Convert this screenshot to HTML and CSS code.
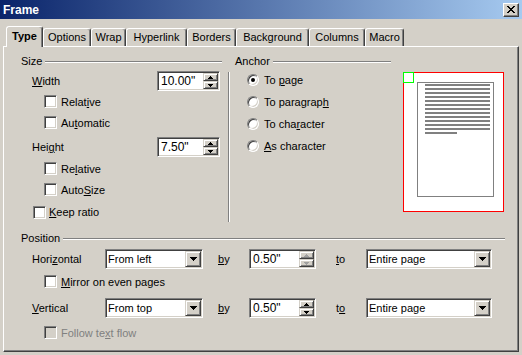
FILE: index.html
```html
<!DOCTYPE html>
<html>
<head>
<meta charset="utf-8">
<link rel="stylesheet" href="styles.css">
</head>
<body>
<div class="titlebar">
  <span class="title">Frame</span>
  <div class="close">
    <svg width="8" height="7" viewBox="0 0 8 7">
      <rect x="0" y="0" width="2" height="1"/><rect x="6" y="0" width="2" height="1"/>
      <rect x="1" y="1" width="2" height="1"/><rect x="5" y="1" width="2" height="1"/>
      <rect x="2" y="2" width="4" height="1"/>
      <rect x="3" y="3" width="2" height="1"/>
      <rect x="2" y="4" width="4" height="1"/>
      <rect x="1" y="5" width="2" height="1"/><rect x="5" y="5" width="2" height="1"/>
      <rect x="0" y="6" width="2" height="1"/><rect x="6" y="6" width="2" height="1"/>
    </svg>
  </div>
</div>

<div class="tabs">
  <div class="tab active t-type">Type</div>
  <div class="tab t-options">Options</div>
  <div class="tab t-wrap">Wrap</div>
  <div class="tab t-hyper">Hyperlink</div>
  <div class="tab t-borders">Borders</div>
  <div class="tab t-bg">Background</div>
  <div class="tab t-columns">Columns</div>
  <div class="tab t-macro">Macro</div>
</div>

<div class="panel">
  <div class="top">
    <div class="size-col">
      <div class="ghead"><span>Size</span></div>
      <div class="frow first">
        <span class="flabel"><u>W</u>idth</span>
        <div class="spin w63">
          <span class="val">10.00"</span>
          <div class="sbtns">
            <div class="sbtn"><svg width="5" height="3"><path d="M2 0h1v1h1v1h1v1H0V2h1V1h1z"/></svg></div>
            <div class="sbtn"><svg width="5" height="3"><path d="M0 0h5v1h-1v1h-1v1h-1v-1h-1v-1h-1z"/></svg></div>
          </div>
        </div>
      </div>
      <div class="check ind2"><div class="cb"></div><span>Relat<u>i</u>ve</span></div>
      <div class="check ind2"><div class="cb"></div><span>Au<u>t</u>omatic</span></div>
      <div class="frow second">
        <span class="flabel">Hei<u>g</u>ht</span>
        <div class="spin w63">
          <span class="val">7.50"</span>
          <div class="sbtns">
            <div class="sbtn"><svg width="5" height="3"><path d="M2 0h1v1h1v1h1v1H0V2h1V1h1z"/></svg></div>
            <div class="sbtn"><svg width="5" height="3"><path d="M0 0h5v1h-1v1h-1v1h-1v-1h-1v-1h-1z"/></svg></div>
          </div>
        </div>
      </div>
      <div class="check ind2 gap1"><div class="cb"></div><span>Re<u>l</u>ative</span></div>
      <div class="check ind2"><div class="cb"></div><span>Auto<u>S</u>ize</span></div>
      <div class="check ind1 keep"><div class="cb"></div><span><u>K</u>eep ratio</span></div>
    </div>

    <div class="vsep"></div>

    <div class="anchor-col">
      <div class="ghead"><span>Anchor</span></div>
      <div class="radios">
        <div class="rrow"><div class="radio on"></div><span>To <u>p</u>age</span></div>
        <div class="rrow"><div class="radio"></div><span>To paragrap<u>h</u></span></div>
        <div class="rrow"><div class="radio"></div><span>To cha<u>r</u>acter</span></div>
        <div class="rrow"><div class="radio"></div><span><u>A</u>s character</span></div>
      </div>
    </div>

    <div class="preview">
      <div class="amark"></div>
      <div class="page">
        <div class="ln"></div><div class="ln"></div><div class="ln"></div><div class="ln"></div>
        <div class="ln"></div><div class="ln"></div><div class="ln"></div><div class="ln"></div>
        <div class="ln"></div><div class="ln"></div><div class="ln"></div><div class="ln"></div>
        <div class="ln short"></div>
      </div>
    </div>
  </div>

  <div class="position">
    <div class="ghead"><span>Position</span></div>
    <div class="prow first">
      <span class="plabel">Hori<u>z</u>ontal</span>
      <div class="combo w98"><span class="cval">From left</span><div class="dbtn"><svg width="7" height="4"><path d="M0 0h7v1h-1v1h-1v1h-1v1h-1v-1h-1v-1h-1v-1h-1z"/></svg></div></div>
      <span class="by"><u>b</u>y</span>
      <div class="spin w67">
        <span class="val">0.50"</span>
        <div class="sbtns dim">
          <div class="sbtn"><svg width="5" height="3"><path d="M2 0h1v1h1v1h1v1H0V2h1V1h1z"/></svg></div>
          <div class="sbtn"><svg width="5" height="3"><path d="M0 0h5v1h-1v1h-1v1h-1v-1h-1v-1h-1z"/></svg></div>
        </div>
      </div>
      <span class="to"><u>t</u>o</span>
      <div class="combo w126"><span class="cval">Entire page</span><div class="dbtn"><svg width="7" height="4"><path d="M0 0h7v1h-1v1h-1v1h-1v1h-1v-1h-1v-1h-1v-1h-1z"/></svg></div></div>
    </div>
    <div class="check ind2 mirror"><div class="cb"></div><span><u>M</u>irror on even pages</span></div>
    <div class="prow second">
      <span class="plabel"><u>V</u>ertical</span>
      <div class="combo w98"><span class="cval">From top</span><div class="dbtn"><svg width="7" height="4"><path d="M0 0h7v1h-1v1h-1v1h-1v1h-1v-1h-1v-1h-1v-1h-1z"/></svg></div></div>
      <span class="by"><u>b</u>y</span>
      <div class="spin w67">
        <span class="val">0.50"</span>
        <div class="sbtns">
          <div class="sbtn"><svg width="5" height="3"><path d="M2 0h1v1h1v1h1v1H0V2h1V1h1z"/></svg></div>
          <div class="sbtn"><svg width="5" height="3"><path d="M0 0h5v1h-1v1h-1v1h-1v-1h-1v-1h-1z"/></svg></div>
        </div>
      </div>
      <span class="to">t<u>o</u></span>
      <div class="combo w126"><span class="cval">Entire page</span><div class="dbtn"><svg width="7" height="4"><path d="M0 0h7v1h-1v1h-1v1h-1v1h-1v-1h-1v-1h-1v-1h-1z"/></svg></div></div>
    </div>
    <div class="check ind2 follow disabled"><div class="cb"></div><span>Follow te<u>x</u>t flow</span></div>
  </div>
</div>
</body>
</html>
```

FILE: styles.css
```css
html, body {
  margin: 0;
  padding: 0;
}
body {
  width: 522px;
  height: 355px;
  overflow: hidden;
  background: #d4d0c8;
  font-family: "Liberation Sans", Arial, sans-serif;
  font-size: 11px;
  color: #000;
}
u {
  text-decoration: underline;
  text-decoration-thickness: 1px;
  text-underline-offset: 1px;
}

/* title bar */
.titlebar {
  height: 19px;
  box-sizing: border-box;
  padding: 0 3px 0 3px;
  background: linear-gradient(to right, #0a246a, #a6caf0);
  display: flex;
  align-items: center;
  justify-content: space-between;
}
.title {
  color: #fff;
  font-weight: bold;
  font-size: 12px;
}
.close {
  width: 16px;
  height: 14px;
  box-sizing: border-box;
  background: #d4d0c8;
  border: 1px solid;
  border-color: #fff #404040 #404040 #fff;
  box-shadow: inset -1px -1px #808080;
  display: flex;
  align-items: center;
  justify-content: center;
}
.close svg { fill: #000; display: block; }

/* tabs */
.tabs {
  display: flex;
  align-items: flex-start;
  height: 21px;
  margin: 7px 0 -1px 6px;
}
.tab {
  box-sizing: border-box;
  height: 18px;
  margin-top: 2px;
  border: 1px solid;
  border-bottom: none;
  border-color: #fff #404040 transparent #fff;
  border-radius: 3px 3px 0 0;
  box-shadow: inset -1px 0 #808080;
  text-align: center;
  line-height: 17px;
  background: #d4d0c8;
}
.tab.active {
  height: 21px;
  margin-top: 0;
  font-weight: bold;
  line-height: 18px;
  position: relative;
  z-index: 1;
}
.t-type { width: 37px; }
.t-options { width: 48px; }
.t-wrap { width: 35px; }
.t-hyper { width: 61px; }
.t-borders { width: 49px; }
.t-bg { width: 73px; }
.t-columns { width: 56px; }
.t-macro { width: 39px; }

/* panel */
.panel {
  margin-left: 3px;
  width: 516px;
  height: 306px;
  box-sizing: border-box;
  border: 1px solid;
  border-color: #fff #404040 #404040 #fff;
  box-shadow: inset -1px -1px #808080;
  padding: 7px 0 0 17px;
}
.top {
  display: flex;
  height: 170px;
}

/* group header with etched line */
.ghead {
  display: flex;
  align-items: flex-start;
  height: 14px;
  line-height: 14px;
}
.ghead::after {
  content: "";
  flex: 1;
  margin: 7px 0 0 3px;
  border-top: 1px solid #808080;
  border-bottom: 1px solid #fff;
}

/* size column */
.size-col { width: 201px; }
.frow {
  display: flex;
  align-items: center;
  height: 20px;
  padding-left: 11px;
}
.frow.first { margin-top: 3px; }
.frow.second { margin-top: 4px; }
.flabel { width: 125px; }

.check {
  display: flex;
  align-items: center;
  height: 21px;
}
.check span { margin-left: 4px; }
.ind2 { padding-left: 23px; }
.ind1 { padding-left: 12px; }
.gap1 { margin-top: 1px; }
.keep { margin-top: 1px; height: 22px; }
.keep span { margin-left: 3px; }

.cb {
  width: 13px;
  height: 13px;
  box-sizing: border-box;
  border: 1px solid;
  border-color: #808080 #fff #fff #808080;
  box-shadow: inset 1px 1px #404040, inset -1px -1px #d4d0c8;
  background: #fff;
  flex: none;
}
.disabled .cb { background: #d4d0c8; }
.disabled span { color: #808080; }

/* spin field */
.spin, .combo {
  height: 20px;
  box-sizing: border-box;
  border: 1px solid;
  border-color: #808080 #fff #fff #808080;
  padding: 1px;
  box-shadow: inset 1px 1px #404040, inset -1px -1px #d4d0c8;
  background: #fff;
  display: flex;
  align-items: center;
  flex: none;
}
.w63 { width: 63px; }
.w67 { width: 67px; }
.w98 { width: 98px; }
.w126 { width: 126px; }
.val {
  flex: 1;
  padding-left: 2px;
  font-size: 12px;
  line-height: 16px;
}
.sbtns {
  width: 15px;
  height: 16px;
  display: flex;
  flex-direction: column;
}
.sbtn, .dbtn {
  box-sizing: border-box;
  background: #d4d0c8;
  border: 1px solid;
  border-color: #d4d0c8 #404040 #404040 #d4d0c8;
  box-shadow: inset 1px 1px #fff, inset -1px -1px #808080;
  display: flex;
  align-items: center;
  justify-content: center;
}
.sbtn { height: 8px; }
.sbtn svg, .dbtn svg { display: block; fill: #000; }
.sbtns.dim svg { fill: #a0a0a0; }
.cval {
  flex: 1;
  padding-left: 1px;
  line-height: 16px;
}
.dbtn {
  width: 16px;
  height: 16px;
}

/* separator */
.vsep {
  width: 0;
  height: 150px;
  margin: 18px 0 0 6px;
  border-left: 1px solid #808080;
  border-right: 1px solid #fff;
}

/* anchor */
.anchor-col {
  width: 156px;
  margin-left: 5px;
}
.radios { padding-top: 1px; }
.rrow {
  display: flex;
  align-items: center;
  height: 22px;
  padding-left: 12px;
}
.rrow span { margin-left: 5px; }
.radio {
  width: 12px;
  height: 12px;
  box-sizing: border-box;
  border-radius: 50%;
  border: 1px solid;
  border-color: #808080 #fff #fff #808080;
  box-shadow: inset 1px 1px #404040, inset -1px -1px #d4d0c8;
  background: #fff;
  display: flex;
  align-items: center;
  justify-content: center;
  flex: none;
}
.radio.on::after {
  content: "";
  width: 4px;
  height: 4px;
  border-radius: 50%;
  background: #000;
}

/* preview */
.preview {
  position: relative;
  width: 101px;
  height: 140px;
  box-sizing: border-box;
  margin: 18px 0 0 12px;
  border: 1px solid #f00;
  background: #fff;
  padding: 9px 0 0 13px;
}
.amark {
  position: absolute;
  left: -1px;
  top: -1px;
  width: 11px;
  height: 11px;
  box-sizing: border-box;
  border: 1px solid #0f0;
  background: #fff;
}
.page {
  width: 77px;
  height: 115px;
  box-sizing: border-box;
  border: 1px solid #808080;
  padding: 1px 0 0 7px;
  display: flex;
  flex-direction: column;
  gap: 2px;
}
.ln {
  width: 65px;
  height: 2px;
  background: #808080;
}
.ln.short { width: 32px; }

/* position */
.position {
  width: 484px;
  margin-top: 7px;
}
.prow {
  display: flex;
  align-items: center;
  height: 20px;
  padding-left: 11px;
}
.prow.first { margin-top: 4px; }
.prow.second { margin-top: 6px; }
.plabel { width: 73px; }
.by { width: 31px; margin-left: 15px; }
.to { width: 30px; margin-left: 20px; }
.mirror { margin-top: 2px; }
.follow { margin-top: 4px; }
```
